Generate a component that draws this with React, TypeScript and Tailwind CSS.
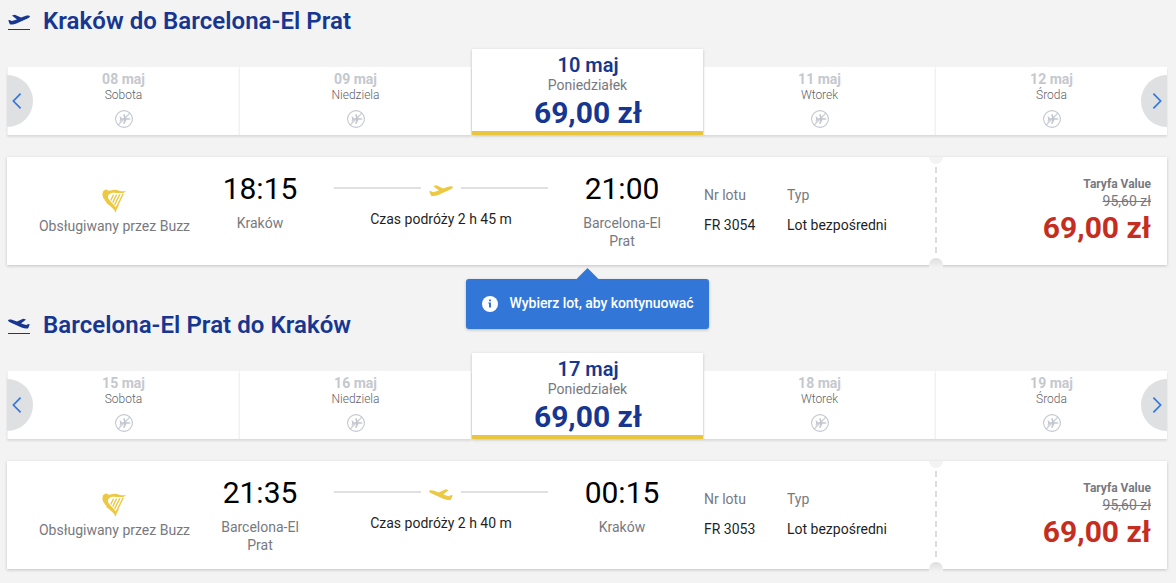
import React from 'react';
import { clsx } from 'clsx';

interface Fare {
  date: string;
  day: string;
  price?: string;
}

interface Flight {
  departureTime: string;
  departureCity: string;
  arrivalTime: string;
  arrivalCity: string;
  duration: string;
  flightNumber: string;
  oldPrice: string;
  price: string;
}

interface JourneyProps {
  title: string;
  inbound?: boolean;
  fares: Fare[];
  flight: Flight;
}

const outboundFares: Fare[] = [
  { date: '08 maj', day: 'Sobota' },
  { date: '09 maj', day: 'Niedziela' },
  { date: '10 maj', day: 'Poniedziałek', price: '69,00 zł' },
  { date: '11 maj', day: 'Wtorek' },
  { date: '12 maj', day: 'Środa' },
];

const inboundFares: Fare[] = [
  { date: '15 maj', day: 'Sobota' },
  { date: '16 maj', day: 'Niedziela' },
  { date: '17 maj', day: 'Poniedziałek', price: '69,00 zł' },
  { date: '18 maj', day: 'Wtorek' },
  { date: '19 maj', day: 'Środa' },
];

const outboundFlight: Flight = {
  departureTime: '18:15',
  departureCity: 'Kraków',
  arrivalTime: '21:00',
  arrivalCity: 'Barcelona-El Prat',
  duration: '2 h 45 m',
  flightNumber: 'FR 3054',
  oldPrice: '95,60 zł',
  price: '69,00 zł',
};

const inboundFlight: Flight = {
  departureTime: '21:35',
  departureCity: 'Barcelona-El Prat',
  arrivalTime: '00:15',
  arrivalCity: 'Kraków',
  duration: '2 h 40 m',
  flightNumber: 'FR 3053',
  oldPrice: '95,60 zł',
  price: '69,00 zł',
};

const PlaneIcon: React.FC<{ className?: string; flipped?: boolean }> = ({ className, flipped }) => (
  <svg viewBox="0 0 24 12" className={clsx(className, flipped && '-scale-x-100')} fill="currentColor" aria-hidden="true">
    <path d="M.3 6.2 1.6 5.9 4.2 7.2 9.8 5.4 4.3 1 7.4.3 14.2 3.4 18.9 1.7C21 1 23.6 1 23.9 2c.2.9-1.2 1.8-2.6 2.4L9.2 9.9C6.6 11 4.1 11.3 2.5 10.8c-.5-.2-.7-.6-.9-1.1Z" />
  </svg>
);

const HarpIcon = () => (
  <svg viewBox="0 0 24 24" className="h-6 w-6" aria-hidden="true">
    <path
      d="M2.300 1.300C3.300.100 5.300.200 6 1.600 8.500 2 10.200.500 13 .700 16.500 1 18.500 2.800 24 2.200 22.500 3.700 20.800 4.100 19 4.100 15.500 4.200 12.500 3.200 9.500 3.900 7 4.500 5.800 6.200 6 8.200 6.300 11 10.500 13.600 13.500 18.200L17.400 15.500C15.600 18 14.500 20.700 13.600 23.700 12.400 20.500 9 17.600 5 14.500 4.300 13.900 4.200 13.300 4.400 12.700 3 12 2.200 11.200 2.500 10.200 1.100 9.300.600 8.400 1.100 7.300 0 6.300 0 5.200.800 4.500.200 3.300 1.100 2 2.300 1.300Z"
      fill="#edc843"
    />
    <path
      d="M11.500 5.800 8.700 11.500M14.700 5.500 10.700 13.600M17.900 5.200 12.600 15.900M21.200 4.800 14.500 18.400"
      stroke="#edc843"
      strokeWidth="1.400"
    />
  </svg>
);

const NoFlightIcon = () => (
  <svg viewBox="0 0 18 18" className="h-[18px] w-[18px] text-[#c4c8ce]" aria-hidden="true">
    <circle cx="9" cy="9" r="8.4" fill="none" stroke="currentColor" strokeWidth="1.1" />
    <path
      d="M4.500 6.500h1l1.300 1.700h2.200L8.200 4h1.200l2.200 4.200h2.300c1 0 1.500.500 1.500.800s-.500.800-1.500.800h-2.300L9.400 14H8.200L9 9.800H6.800L5.500 11.500h-1L5.200 9Z"
      fill="currentColor"
    />
    <path d="M3.200 14.800 14.800 3.200" stroke="currentColor" strokeWidth="1.100" />
  </svg>
);

const InfoIcon = () => (
  <svg viewBox="0 0 16 16" className="h-4 w-4" aria-hidden="true">
    <circle cx="8" cy="8" r="8" fill="#fff" />
    <path d="M7 3.500h2v1.700H7zM6.300 6.500H9v5H7V7.500h-.7z" fill="#3277d8" />
  </svg>
);

const CarouselArrow: React.FC<{ direction: 'left' | 'right' }> = ({ direction }) => (
  <button
    type="button"
    aria-label={direction === 'left' ? 'Poprzedni' : 'Następny'}
    className={clsx(
      'absolute bottom-2 z-10 flex h-[52px] w-[26px] items-center bg-[#dfe0e2] text-[#3277d8]',
      direction === 'left' ? 'left-0 rounded-r-full pl-[5px]' : 'right-0 rounded-l-full pl-[11px]'
    )}
  >
    <svg viewBox="0 0 10 16" className="h-4 w-[10px]" fill="none" stroke="currentColor" strokeWidth="1.7">
      <path d={direction === 'left' ? 'M8.600.700 1.400 8l7.200 7.300' : 'M1.400.700 8.600 8l-7.200 7.300'} />
    </svg>
  </button>
);

const FareTab: React.FC<{ fare: Fare }> = ({ fare }) => {
  if (fare.price) {
    return (
      <div className="z-[1] flex h-[86px] w-1/5 justify-end">
        <div className="flex w-[231px] flex-col items-center border-b-4 border-[#eac63f] bg-white pt-[5px] shadow-[0_1px_3px_rgba(0,0,0,0.2)]">
          <span className="pl-px text-xl leading-[22px] font-semibold text-[#163691]">{fare.date}</span>
          <span className="text-sm leading-[18px] text-[#77797f]">{fare.day}</span>
          <span className="mt-px pl-px text-[30px] leading-9 font-bold text-[#163691]">{fare.price}</span>
        </div>
      </div>
    );
  }

  return (
    <div className="flex h-[68px] w-1/5 flex-col items-center border-l border-[#f1f1f1] bg-white pt-1 shadow-[0_2px_2px_rgba(0,0,0,0.1)]">
      <span className="text-sm leading-4 font-bold text-[#c4c8ce]">{fare.date}</span>
      <span className="mb-[7px] text-xs leading-4 font-light text-[#5f6168]">{fare.day}</span>
      <NoFlightIcon />
    </div>
  );
};

const Endpoint: React.FC<{ time: string; city: string }> = ({ time, city }) => (
  <div className="flex w-[100px] flex-col items-center pt-3 text-center">
    <span className="text-[30px] leading-10 text-black">{time}</span>
    <span className="mt-[5px] text-sm leading-[18px] text-[#77797f]">{city}</span>
  </div>
);

const FlightCard: React.FC<{ flight: Flight; inbound?: boolean }> = ({ flight, inbound }) => (
  <article className="flex h-[108px] bg-white text-sm shadow-[0_1px_3px_rgba(0,0,0,0.2)]">
    <div className="flex w-[922px] pl-8">
      <div className="flex w-[151px] flex-col items-center pt-8 whitespace-nowrap text-[#77797f]">
        <div className="mr-px">
          <HarpIcon />
        </div>
        <span className="mt-1 leading-[18px]">Obsługiwany przez Buzz</span>
      </div>
      <div className="ml-5">
        <Endpoint time={flight.departureTime} city={flight.departureCity} />
      </div>
      <div className="ml-6 flex w-[214px] flex-col items-center pt-[25px]">
        <div className="flex w-full justify-between text-[#edc843]">
          <span className="mt-[5px] h-0.5 w-[87px] bg-[#e0e0e0]" />
          <PlaneIcon className="mt-[3px] h-3 w-6" flipped={inbound} />
          <span className="mt-[5px] h-0.5 w-[87px] bg-[#e0e0e0]" />
        </div>
        <span className="mt-[13px] leading-[18px] text-[#1f1f1f]">Czas podróży {flight.duration}</span>
      </div>
      <div className="ml-6">
        <Endpoint time={flight.arrivalTime} city={flight.arrivalCity} />
      </div>
      <dl className="ml-8 flex pt-[29px] leading-[18px]">
        <div className="w-[83px]">
          <dt className="text-[#77797f]">Nr lotu</dt>
          <dd className="mt-3 text-[#1f1f1f]">{flight.flightNumber}</dd>
        </div>
        <div>
          <dt className="text-[#77797f]">Typ</dt>
          <dd className="mt-3 text-[#1f1f1f]">Lot bezpośredni</dd>
        </div>
      </dl>
    </div>
    {/* Ticket tear line */}
    <div className="flex h-[111px] w-[14px] flex-col items-center">
      <div className="h-[7px] w-full rounded-b-full bg-[#f3f3f3]" />
      <div className="mt-[3px] h-[88px] w-0.5 bg-[repeating-linear-gradient(to_bottom,#dddddd_0_6px,transparent_6px_10px)]" />
      <div className="mt-[3px] h-[10px] w-full rounded-t-[7px] bg-linear-to-b from-[#dedede] to-[#f3f3f3]" />
    </div>
    <div className="flex flex-1 flex-col items-end pt-[18px] pr-4 text-[#77797f]">
      <span className="text-xs leading-[18px] font-bold">Taryfa Value</span>
      <span className="text-sm leading-4 line-through">{flight.oldPrice}</span>
      <span className="mt-px text-[30px] leading-9 font-bold text-[#c62d21]">{flight.price}</span>
    </div>
  </article>
);

const Journey: React.FC<JourneyProps> = ({ title, inbound, fares, flight }) => (
  <section className="h-[304px] pr-[9px] pl-[7px]">
    <header className="flex h-[49px] text-[#163691]">
      <div className="mt-[14px] ml-px flex w-[22px] flex-col gap-[3px]">
        <PlaneIcon className="h-3 w-[22px]" flipped={inbound} />
        <span className="h-px bg-[#163691]" />
      </div>
      <h2 className="mt-[5px] ml-[13px] text-2xl leading-8 font-semibold tracking-[0.06px]">{title}</h2>
    </header>
    <div className="relative flex h-[86px] items-end">
      <CarouselArrow direction="left" />
      {fares.map((fare) => (
        <FareTab key={fare.date} fare={fare} />
      ))}
      <CarouselArrow direction="right" />
    </div>
    <div className="mt-[22px]">
      <FlightCard flight={flight} inbound={inbound} />
    </div>
  </section>
);

const SelectFlightHint = () => (
  <div className="absolute top-[268px] left-[466px] flex flex-col items-center">
    <span className="h-[11px] w-[22px] bg-[#3277d8] [clip-path:polygon(50%_0,100%_100%,0_100%)]" />
    <div className="flex h-[50px] w-[243px] items-center rounded-[3px] bg-[#3277d8] pl-4 text-sm font-medium whitespace-nowrap text-white shadow-[0_1px_3px_rgba(0,0,0,0.25)]">
      <InfoIcon />
      <span className="-mt-0.5 ml-[11.5px] tracking-[-0.05px]">Wybierz lot, aby kontynuować</span>
    </div>
  </div>
);

const App = () => (
  <main className="relative h-[583px] overflow-hidden bg-[#f3f3f3] font-[Roboto,sans-serif]">
    <Journey title="Kraków do Barcelona-El Prat" fares={outboundFares} flight={outboundFlight} />
    <Journey title="Barcelona-El Prat do Kraków" inbound fares={inboundFares} flight={inboundFlight} />
    <SelectFlightHint />
  </main>
);

export default App;
